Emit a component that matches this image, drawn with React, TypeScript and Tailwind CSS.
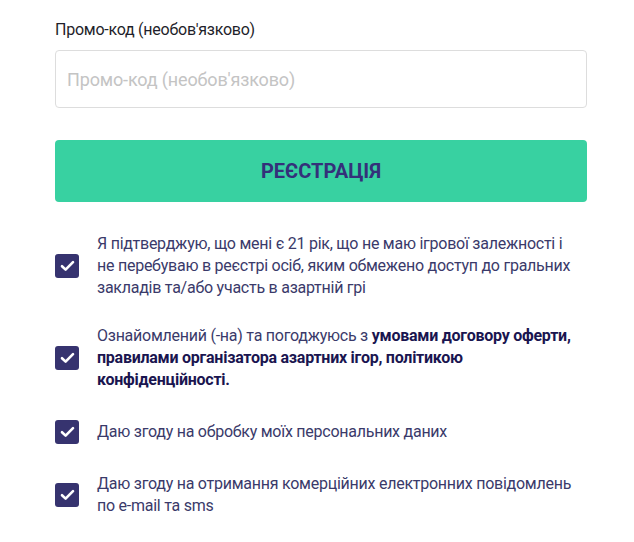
import React from "react";

function Check() {
  return (
    <span className="flex h-[24px] w-[24px] shrink-0 items-center justify-center rounded-[3px] bg-[#36336f]">
      <svg width="15" height="12" viewBox="0 0 15 12" fill="none">
        <path d="M2 6.2 L5.6 9.6 L13 2.2" stroke="white" strokeWidth="2.6" strokeLinecap="round" strokeLinejoin="round" />
      </svg>
    </span>
  );
}

function Row({ children }: { children: React.ReactNode }) {
  return (
    <label className="flex items-center gap-[18px]">
      <Check />
      <span className="max-w-[480px] text-[16px] leading-[22px] tracking-[-0.25px] text-[#3a3a6a]">{children}</span>
    </label>
  );
}

export default function App() {
  return (
    <div className="min-h-[542px] bg-white pl-[55px] pt-[18px] font-['Roboto',sans-serif]" style={{ width: 634 }}>
      <div className="w-[532px]">
        <div className="text-[16px] leading-[24px] tracking-[-0.25px] text-[#1f1f2b]">Промо-код (необов'язково)</div>
        <input
          className="mt-[8px] block h-[58px] w-full rounded-[4px] border border-[#dddddd] px-[11px] text-[18px] tracking-[-0.15px] text-[#333] outline-none placeholder:text-[#c4c4c4]"
          placeholder="Промо-код (необов'язково)"
        />
        <button className="mt-[32px] flex h-[62px] w-full items-center justify-center rounded-[4px] bg-[#38d1a1] text-[20px] font-bold text-[#34307a]">
          РЕЄСТРАЦІЯ
        </button>
        <div className="mt-[31px] flex flex-col">
          <Row>
            Я підтверджую, що мені є 21 рік, що не маю ігрової залежності і не перебуваю в реєстрі осіб, яким обмежено доступ до гральних закладів та/або участь в азартній грі
          </Row>
          <div className="mt-[26px]">
            <Row>
              Ознайомлений (-на) та погоджуюсь з{" "}
              <b className="font-bold text-[#1a1550]">умовами договору оферти, правилами організатора азартних ігор, політикою конфіденційності.</b>
            </Row>
          </div>
          <div className="mt-[29px]">
            <Row>Даю згоду на обробку моїх персональних даних</Row>
          </div>
          <div className="mt-[29px]">
            <Row>Даю згоду на отримання комерційних електронних повідомлень по e-mail та sms</Row>
          </div>
        </div>
      </div>
    </div>
  );
}
